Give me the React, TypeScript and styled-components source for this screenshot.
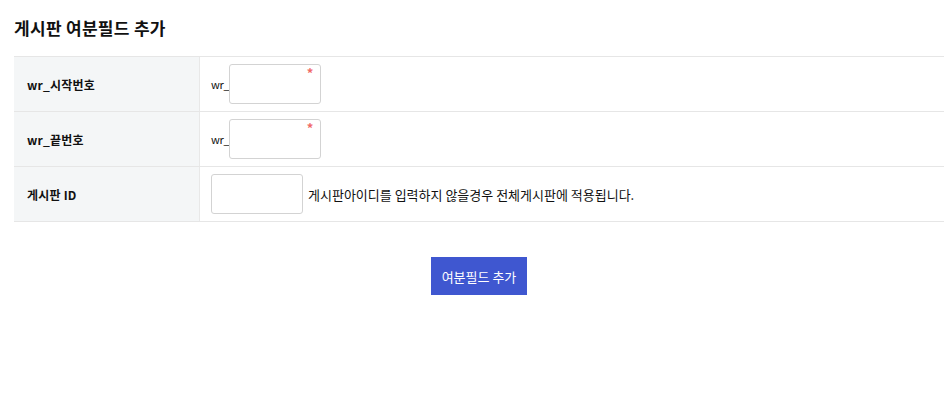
import React from 'react';
import styled, { createGlobalStyle } from 'styled-components';

const GlobalStyle = createGlobalStyle`
  html, body {
    margin: 0;
    padding: 0;
    background: #fff;
  }
  body {
    font-family: "Noto Sans CJK KR", "Noto Sans", sans-serif;
    font-size: 12px;
    color: #000;
  }
`;

interface FieldRow {
  label: string;
  prefix?: string;
  required?: boolean;
  help?: string;
}

const rows: FieldRow[] = [
  { label: 'wr_시작번호', prefix: 'wr_', required: true },
  { label: 'wr_끝번호', prefix: 'wr_', required: true },
  { label: '게시판 ID', help: '게시판아이디를 입력하지 않을경우 전체게시판에 적용됩니다.' },
];

const App: React.FC = () => {
  return (
    <Page>
      <GlobalStyle />
      <Title>게시판 여분필드 추가</Title>
      <FormTable>
        {rows.map((row) => (
          <Row key={row.label}>
            <HeadCell>{row.label}</HeadCell>
            <BodyCell>
              {row.prefix && <Prefix>{row.prefix}</Prefix>}
              <InputWrap>
                <TextInput type="text" />
                {row.required && <Required>*</Required>}
              </InputWrap>
              {row.help && <Help>{row.help}</Help>}
            </BodyCell>
          </Row>
        ))}
      </FormTable>
      <Actions>
        <SubmitButton type="button">여분필드 추가</SubmitButton>
      </Actions>
    </Page>
  );
};

export default App;

const Page = styled.div`
  padding: 0 7px 0 14px;
`;

const Title = styled.h2`
  margin: 0;
  height: 56px;
  display: flex;
  align-items: center;
  padding-bottom: 2px;
  box-sizing: border-box;
  font-size: 17px;
  font-weight: 700;
  letter-spacing: 0.3px;
  color: #111;
`;

const FormTable = styled.div`
  border-top: 1px solid #e6e6e6;
`;

const Row = styled.div`
  display: grid;
  grid-template-columns: 186px 1fr;
  height: 54px;
  border-bottom: 1px solid #e6e6e6;
`;

const HeadCell = styled.div`
  display: flex;
  align-items: center;
  padding-left: 13px;
  background: #f4f6f7;
  border-right: 1px solid #e8e8e8;
  font-size: 12px;
  font-weight: 700;
  letter-spacing: 0.2px;
  color: #111;
`;

const BodyCell = styled.div`
  display: flex;
  align-items: center;
  padding-left: 11px;
`;

const Prefix = styled.span`
  font-size: 11px;
  letter-spacing: -0.3px;
  color: #111;
`;

const InputWrap = styled.span`
  position: relative;
  display: inline-flex;
`;

const TextInput = styled.input`
  box-sizing: border-box;
  width: 92px;
  height: 40px;
  margin: 0;
  border: 1px solid #d3d3d3;
  border-radius: 3px;
  background: #fff;
  outline: none;
`;

const Required = styled.span`
  position: absolute;
  top: 2px;
  right: 8px;
  font-size: 13px;
  font-weight: 700;
  line-height: 1;
  color: #f06a6a;
`;

const Help = styled.span`
  margin-left: 5px;
  font-size: 13px;
  color: #111;
`;

const Actions = styled.div`
  display: flex;
  justify-content: center;
  padding-top: 35px;
`;

const SubmitButton = styled.button`
  width: 96px;
  height: 38px;
  border: 0;
  border-radius: 0;
  background: #3f57d0;
  color: #fff;
  font-family: "Noto Sans CJK KR", "Noto Sans", sans-serif;
  font-size: 13px;
  cursor: pointer;
`;
